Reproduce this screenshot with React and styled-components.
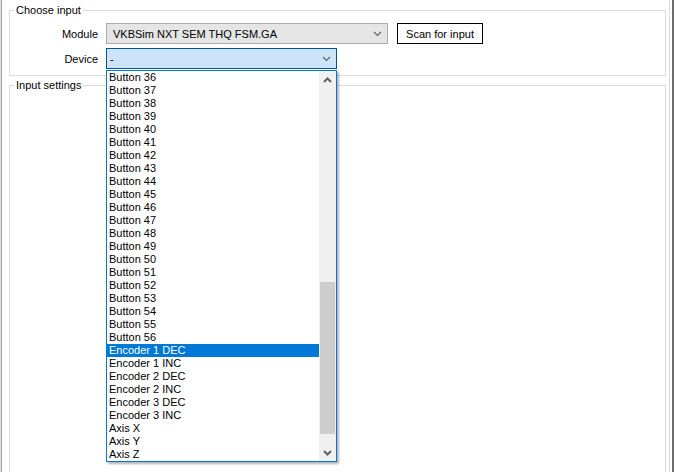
import React from 'react';
import styled, { createGlobalStyle } from 'styled-components';

const GlobalStyle = createGlobalStyle`
  html, body {
    margin: 0;
    padding: 0;
    background: #ffffff;
  }
  body {
    font-family: 'Liberation Sans', Arial, sans-serif;
    font-size: 11px;
    color: #000;
  }
`;

const items = [];
for (let i = 36; i <= 56; i++) items.push(`Button ${i}`);
items.push(
  'Encoder 1 DEC',
  'Encoder 1 INC',
  'Encoder 2 DEC',
  'Encoder 2 INC',
  'Encoder 3 DEC',
  'Encoder 3 INC',
  'Axis X',
  'Axis Y',
  'Axis Z'
);
const selected = 'Encoder 1 DEC';

function Chevron({ up }) {
  return (
    <svg width="9" height="6" viewBox="0 0 9 6">
      <path
        d={up ? 'M1 5 L4.5 1.5 L8 5' : 'M1 1 L4.5 4.5 L8 1'}
        fill="none"
        stroke="#606060"
        strokeWidth="1.2"
      />
    </svg>
  );
}

function ScrollArrow({ up }) {
  return (
    <svg width="9" height="6" viewBox="0 0 9 6">
      <path
        d={up ? 'M1 5 L4.5 1.5 L8 5' : 'M1 1 L4.5 4.5 L8 1'}
        fill="none"
        stroke="#606060"
        strokeWidth="2"
      />
    </svg>
  );
}

export default function App() {
  return (
    <>
      <GlobalStyle />
      <Frame>
        <LeftEdge />
        <Main>
          <GroupBox>
            <Legend>Choose input</Legend>
            <FormGrid>
              <Label>Module</Label>
              <Row>
                <ComboBox $width={282} $variant="disabled">
                  <ComboText $pad={6}>VKBSim NXT SEM THQ FSM.GA</ComboText>
                  <Chevron />
                </ComboBox>
                <Button>Scan for input</Button>
              </Row>
              <Label>Device</Label>
              <Row>
                <ComboBox $width={231} $variant="focused">
                  <ComboText $pad={3}>-</ComboText>
                  <Chevron />
                </ComboBox>
              </Row>
            </FormGrid>
            <DropList>
              <ListItems>
                {items.map((it) => (
                  <ListItem key={it} $selected={it === selected}>
                    {it}
                  </ListItem>
                ))}
              </ListItems>
              <ScrollBar>
                <ScrollButton>
                  <ScrollArrow up />
                </ScrollButton>
                <Track>
                  <Thumb />
                </Track>
                <ScrollButton>
                  <ScrollArrow />
                </ScrollButton>
              </ScrollBar>
            </DropList>
          </GroupBox>
          <GroupBox $grow>
            <Legend>Input settings</Legend>
          </GroupBox>
        </Main>
        <RightEdge>
          <EdgeLine />
          <EdgeGap />
          <EdgeDark />
        </RightEdge>
      </Frame>
    </>
  );
}

const Frame = styled.div`
  width: 674px;
  height: 472px;
  display: flex;
  overflow: hidden;
  background: #fff;
`;

const LeftEdge = styled.div`
  width: 1px;
  border-left: 1px solid #e3e3e3;
  background: #a0a0a0;
  flex-shrink: 0;
`;

const Main = styled.div`
  flex: 1;
  display: flex;
  flex-direction: column;
  padding: 4px 3px 0 7px;
  gap: 3px;
`;

const RightEdge = styled.div`
  display: flex;
  flex-shrink: 0;
`;

const EdgeLine = styled.div`
  width: 1px;
  background: #dcdcdc;
`;

const EdgeGap = styled.div`
  width: 2px;
  background: #fff;
`;

const EdgeDark = styled.div`
  width: 2px;
  background: #6d6d6d;
`;

const GroupBox = styled.fieldset`
  position: relative;
  margin: 0;
  padding: 6px 0 6px 4px;
  border: 1px solid #dcdcdc;
  min-width: 0;
  ${(p) => p.$grow && 'flex: 1; min-height: 420px;'}
`;

const Legend = styled.legend`
  padding: 0 2px;
  font-size: 11px;
  line-height: 13px;
  color: #000;
`;

const FormGrid = styled.div`
  display: grid;
  grid-template-columns: 84px auto;
  column-gap: 8px;
  row-gap: 4px;
  align-items: center;
`;

const Label = styled.div`
  text-align: right;
  font-size: 11px;
`;

const Row = styled.div`
  display: flex;
  align-items: center;
  gap: 9px;
`;

const ComboBox = styled.div`
  box-sizing: border-box;
  width: ${(p) => p.$width}px;
  height: 21px;
  display: flex;
  align-items: center;
  padding-right: 5px;
  border: 1px solid
    ${(p) => (p.$variant === 'focused' ? '#005499' : '#adadad')};
  background: ${(p) => (p.$variant === 'focused' ? '#cce4f7' : '#e5e5e5')};
`;

const ComboText = styled.span`
  flex: 1;
  padding-left: ${(p) => p.$pad}px;
  font-size: 11px;
  white-space: nowrap;
`;

const Button = styled.button`
  box-sizing: border-box;
  width: 86px;
  height: 21px;
  padding: 0;
  border: 1px solid #000;
  background: #fdfdfd;
  font-family: 'Liberation Sans', Arial, sans-serif;
  font-size: 11px;
  color: #000;
`;

const DropList = styled.div`
  position: absolute;
  left: 96px;
  top: 53px;
  z-index: 5;
  box-sizing: border-box;
  width: 231px;
  height: 392px;
  display: flex;
  border: 1px solid #0078d7;
  background: #fff;
  box-shadow: 2px 2px 2px rgba(0, 0, 0, 0.3);
`;

const ListItems = styled.div`
  flex: 1;
  display: flex;
  flex-direction: column;
`;

const ListItem = styled.div`
  height: 13px;
  line-height: 13px;
  padding-left: 2px;
  font-size: 11px;
  white-space: nowrap;
  color: ${(p) => (p.$selected ? '#fff' : '#000')};
  background: ${(p) => (p.$selected ? '#0078d7' : 'transparent')};
`;

const ScrollBar = styled.div`
  width: 17px;
  display: flex;
  flex-direction: column;
  background: #f0f0f0;
`;

const ScrollButton = styled.div`
  height: 17px;
  display: flex;
  align-items: center;
  justify-content: center;
`;

const Track = styled.div`
  flex: 1;
  display: flex;
  flex-direction: column;
  justify-content: flex-end;
  padding: 0 1px 10px 1px;
`;

const Thumb = styled.div`
  height: 152px;
  background: #cdcdcd;
`;
